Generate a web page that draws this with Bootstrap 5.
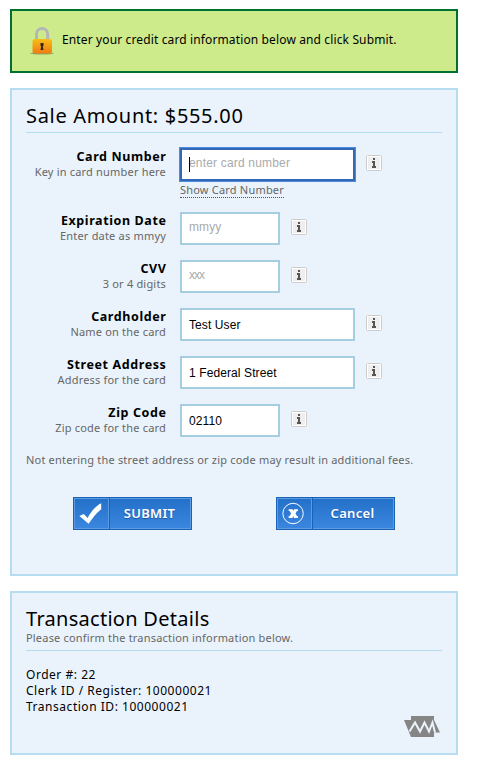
<!DOCTYPE html>
<html lang="en">
<head>
<meta charset="utf-8">
<meta name="viewport" content="width=device-width, initial-scale=1">
<title>Payment</title>
<link href="https://cdn.jsdelivr.net/npm/bootstrap@5.3.0/dist/css/bootstrap.min.css" rel="stylesheet">
<style>
body{font-family:"Noto Sans","Open Sans",sans-serif;font-size:12px;line-height:16px;color:#000;overflow:hidden}
.page{width:448px;margin:9px 0 0 10px}
.notice{height:64px;border:2px solid #007030;background:#cdeb8b;padding:0 0 3px 18px}
.notice-text{letter-spacing:.13px;margin-left:6px;padding-top:1px}
.panel{border:2px solid #b5ddef;background:#eaf3fb;padding:0 14px}
.sale{height:488px;margin-top:15px}
.details{height:164px;margin-top:15px}
.title{font-size:20px;line-height:26px;font-weight:400;margin:0}
.title-wide{letter-spacing:.68px}
.title-mid{letter-spacing:.28px}
.heading{height:43px;padding-top:13px;border-bottom:1px solid #b5ddef}
.heading.tall{height:58px}
.heading.tall .muted{margin-top:-2px}
.muted{color:#666;font-size:11px;line-height:15px;letter-spacing:.19px}
.fields{padding-top:15px}
.field{height:33px;margin-bottom:15px}
.field.first{height:49px}
.caption{width:140px;margin-right:14px;flex:none;padding-top:1px}
.caption b{display:block;line-height:16px;font-size:12.500px;letter-spacing:.6px;margin-right:-.5px}
.caption .muted{margin-top:-1px}
.form-control.box{width:175px;height:33px;border:2px solid #a6cee3;border-radius:0;padding:1px 7px 0;font:12px/28px "Liberation Sans",Arial,sans-serif;letter-spacing:.1px;color:#000;background:#fff}
.form-control.box.short{width:100px}
.form-control.box::placeholder{color:#aaa;opacity:1}
.form-control.box.empty{padding:0 7px 3px}
.form-control.box.tight{letter-spacing:-1px}
.form-control.box.active{border-color:#3268b4;box-shadow:0 0 0 1px #4b8be4;letter-spacing:.18px}
.cursor-bar{position:absolute;left:9px;top:9px;width:1px;height:15px;background:#000}
.reveal{color:#666;font-size:11px;line-height:15px;letter-spacing:.2px;border-bottom:1px dotted #555;margin-top:1px;width:104px;height:16px;white-space:nowrap}
.info{width:16px;height:16px;margin:7px 0 0 11px;flex:none}
.actions{padding:30px 47px 0}
.action{width:119px;height:33px;border:1px solid #1b62b5;border-radius:0;padding:0;color:#fff;background:linear-gradient(#2370c9,#3b87e0);font-weight:600;font-size:13px;box-shadow:inset 0 0 0 1px #5b9be3;text-shadow:0 1px 1px #1c559c}
.action:hover{color:#fff}
.action span{padding-right:2px;letter-spacing:.3px}
.glyph{width:36px;height:31px;border-right:1px solid #1b62b5;box-shadow:inset 0 0 0 1px #5b9be3}
.facts{letter-spacing:.53px}
.seal{margin-top:1px;margin-right:1px}
</style>
<script src="https://cdn.jsdelivr.net/npm/bootstrap@5.3.0/dist/js/bootstrap.bundle.min.js"></script>
</head>
<body>
<svg width="0" height="0" class="position-absolute">
<symbol id="info" viewBox="0 0 16 16"><rect x=".5" y=".5" width="15" height="15" rx="1" fill="#fff" stroke="#ccc"/><rect x="2" y="2" width="12" height="12" fill="#eee"/><path d="M7 3h2v2H7zM6 6h3v5h1v2H6v-2h1V8H6z" fill="#555"/></symbol>
</svg>
<main class="page">
<div class="notice d-flex align-items-center">
<svg width="26" height="30" viewBox="0 0 26 30" class="flex-shrink-0"><defs><linearGradient id="lk" x2="0" y2="1"><stop stop-color="#f8bd17"/><stop offset="1" stop-color="#ef7b13"/></linearGradient></defs><ellipse cx="12" cy="28.300" rx="12" ry="1.3" fill="#8ea85e"/><path d="M6.500 15V9a5.600 5.600 0 0 1 11.200 0V15" fill="none" stroke="#b5b5b5" stroke-width="3"/><rect x="2.500" y="14" width="19.500" height="14.500" rx="2.500" fill="url(#lk)"/><path d="M10.500 18h3v2.700l-.7.8.7 3.500h-3l.7-3.500-.7-.8z" fill="#392509"/></svg>
<span class="text-nowrap notice-text">Enter your credit card information below and click Submit.</span>
</div>
<section class="panel sale">
<div class="heading"><h1 class="title title-wide text-nowrap">Sale Amount: $555.00</h1></div>
<form class="fields">
<div class="field first d-flex"><div class="caption text-end"><b>Card Number</b><div class="muted">Key in card number here</div></div><div class="position-relative"><input class="form-control box empty active" placeholder="enter card number"><span class="cursor-bar"></span><div class="reveal">Show Card Number</div></div><svg class="info"><use href="#info"/></svg></div>
<div class="field d-flex"><div class="caption text-end"><b>Expiration Date</b><div class="muted">Enter date as mmyy</div></div><input class="form-control box short empty" placeholder="mmyy"><svg class="info"><use href="#info"/></svg></div>
<div class="field d-flex"><div class="caption text-end"><b>CVV</b><div class="muted">3 or 4 digits</div></div><input class="form-control box short empty tight" placeholder="xxx"><svg class="info"><use href="#info"/></svg></div>
<div class="field d-flex"><div class="caption text-end"><b>Cardholder</b><div class="muted">Name on the card</div></div><input class="form-control box" value="Test User"><svg class="info"><use href="#info"/></svg></div>
<div class="field d-flex"><div class="caption text-end"><b>Street Address</b><div class="muted">Address for the card</div></div><input class="form-control box" value="1 Federal Street"><svg class="info"><use href="#info"/></svg></div>
<div class="field d-flex"><div class="caption text-end"><b>Zip Code</b><div class="muted">Zip code for the card</div></div><input class="form-control box short" value="02110"><svg class="info"><use href="#info"/></svg></div>
<div class="muted text-nowrap">Not entering the street address or zip code may result in additional fees.</div>
<div class="actions d-flex justify-content-between">
<button type="button" class="btn action d-flex align-items-center"><svg class="glyph" viewBox="0 0 36 31"><path d="M5.500 18l4.500-2 4 4c4-7 8-12 14-15v6c-5 4-9 9-13 15z" fill="#fff"/></svg><span class="flex-fill">SUBMIT</span></button>
<button type="button" class="btn action d-flex align-items-center"><svg class="glyph" viewBox="0 0 36 31"><circle cx="16.500" cy="15.500" r="10.500" fill="none" stroke="#fff"/><path d="M12 11h4l.8 2 .7-2h4v2h-1l-1.500 2.500 1.500 2.500h1v2h-4l-.8-2-.7 2h-4v-2h1l1.500-2.500L13 13h-1z" fill="#fff"/></svg><span class="flex-fill">Cancel</span></button>
</div>
</form>
</section>
<section class="panel details">
<div class="heading tall"><h2 class="title title-mid">Transaction Details</h2><div class="muted">Please confirm the transaction information below.</div></div>
<div class="pt-3 facts"><div>Order #: 22</div><div>Clerk ID / Register: 100000021</div><div>Transaction ID: 100000021</div></div>
<svg class="d-block ms-auto seal" width="37" height="22" viewBox="0 0 37 22"><path d="M7 0h23v4l6 12.500h-6V21H7L0 4h7z" fill="#858585"/><path d="M5.500 15.500l5.500-9 5 9 4.500-9 4.500 9L28.500 6.500l2.500 10" fill="none" stroke="#eaf3fb" stroke-width="2"/></svg>
</section>
</main>
</body>
</html>
